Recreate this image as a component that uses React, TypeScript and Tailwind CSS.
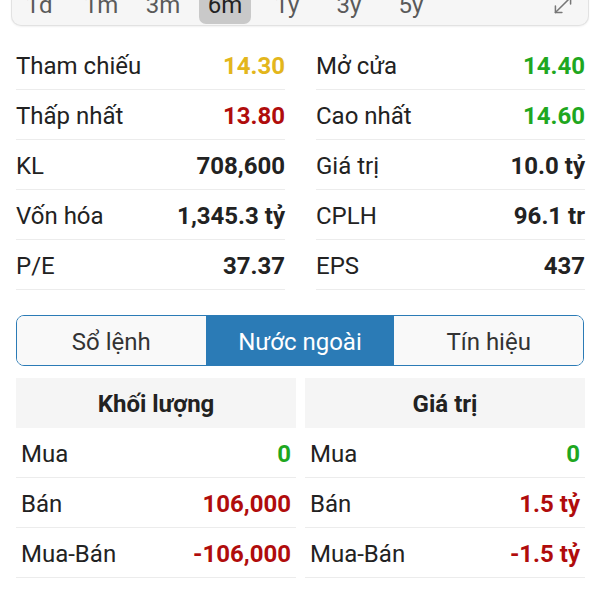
import { MoveDiagonal } from "lucide-react";

type Cell = { label: string; value: string; tone?: "up" | "down" | "ref" };

const toneClass: Record<string, string> = {
  up: "text-[#1fa71f]",
  down: "text-[#b00c0c]",
  ref: "text-[#e3b61c]",
};

const periods = ["1d", "1m", "3m", "6m", "1y", "3y", "5y"];

const stats: Cell[][] = [
  [
    { label: "Tham chiếu", value: "14.30", tone: "ref" },
    { label: "Mở cửa", value: "14.40", tone: "up" },
  ],
  [
    { label: "Thấp nhất", value: "13.80", tone: "down" },
    { label: "Cao nhất", value: "14.60", tone: "up" },
  ],
  [
    { label: "KL", value: "708,600" },
    { label: "Giá trị", value: "10.0 tỷ" },
  ],
  [
    { label: "Vốn hóa", value: "1,345.3 tỷ" },
    { label: "CPLH", value: "96.1 tr" },
  ],
  [
    { label: "P/E", value: "37.37" },
    { label: "EPS", value: "437" },
  ],
];

const volume: Cell[] = [
  { label: "Mua", value: "0", tone: "up" },
  { label: "Bán", value: "106,000", tone: "down" },
  { label: "Mua-Bán", value: "-106,000", tone: "down" },
];

const amount: Cell[] = [
  { label: "Mua", value: "0", tone: "up" },
  { label: "Bán", value: "1.5 tỷ", tone: "down" },
  { label: "Mua-Bán", value: "-1.5 tỷ", tone: "down" },
];

function Row({ cell, inset }: { cell: Cell; inset?: boolean }) {
  return (
    <div
      className={`flex h-[50px] items-center justify-between border-b border-[#ececec] pt-[3px] ${inset ? "px-[5px]" : ""}`}
    >
      <span className="text-[#222]">{cell.label}</span>
      <span className={`font-bold ${cell.tone ? toneClass[cell.tone] : "text-[#222]"}`}>{cell.value}</span>
    </div>
  );
}

function ForeignColumn({ title, rows }: { title: string; rows: Cell[] }) {
  return (
    <div>
      <div className="flex h-[50px] items-center justify-center bg-[#f5f5f5] pt-[2px] font-bold text-[#222]">
        {title}
      </div>
      {rows.map((row) => (
        <Row key={row.label} cell={row} inset />
      ))}
    </div>
  );
}

export default function App() {
  return (
    <div
      className="h-[600px] w-[600px] overflow-hidden bg-white text-[24px] leading-[28px]"
      style={{ fontFamily: "Roboto, 'Noto Sans', sans-serif" }}
    >
      <div className="relative mx-[11px] -mt-[16px] flex h-[42px] items-start rounded-b-[10px] border border-t-0 border-[#e2e2e2] bg-[#f6f6f6] pl-[1px] shadow-[0_1px_2px_rgba(0,0,0,0.06)]">
        <div className="flex gap-[10px]">
          {periods.map((p) => (
            <div
              key={p}
              className={`flex h-[40px] w-[52px] justify-center rounded-b-[7px] pt-[7px] ${
                p === "6m" ? "bg-[#c9c9c9] text-[#222]" : "text-[#5a5a5a]"
              }`}
            >
              {p}
            </div>
          ))}
        </div>
        <MoveDiagonal className="absolute left-[538px] top-[8px] text-[#777]" size={26} strokeWidth={1.4} />
      </div>

      <div className="mt-[14px] grid grid-cols-2 gap-x-[31px] pl-[16px] pr-[15px]">
        {stats.map((pair) => pair.map((cell) => <Row key={cell.label} cell={cell} />))}
      </div>

      <div className="mx-[16px] mt-[25px] grid h-[51px] grid-cols-3 overflow-hidden rounded-[8px] border border-[#2b7bb6]">
        {["Sổ lệnh", "Nước ngoài", "Tín hiệu"].map((t) => (
          <div
            key={t}
            className={`flex items-center justify-center pt-[2px] ${
              t === "Nước ngoài" ? "bg-[#2b7bb6] text-white" : "bg-[#f9f9f9] text-[#333]"
            }`}
          >
            {t}
          </div>
        ))}
      </div>

      <div className="mt-[12px] grid grid-cols-2 gap-x-[9px] pl-[16px] pr-[15px]">
        <ForeignColumn title="Khối lượng" rows={volume} />
        <ForeignColumn title="Giá trị" rows={amount} />
      </div>
    </div>
  );
}
